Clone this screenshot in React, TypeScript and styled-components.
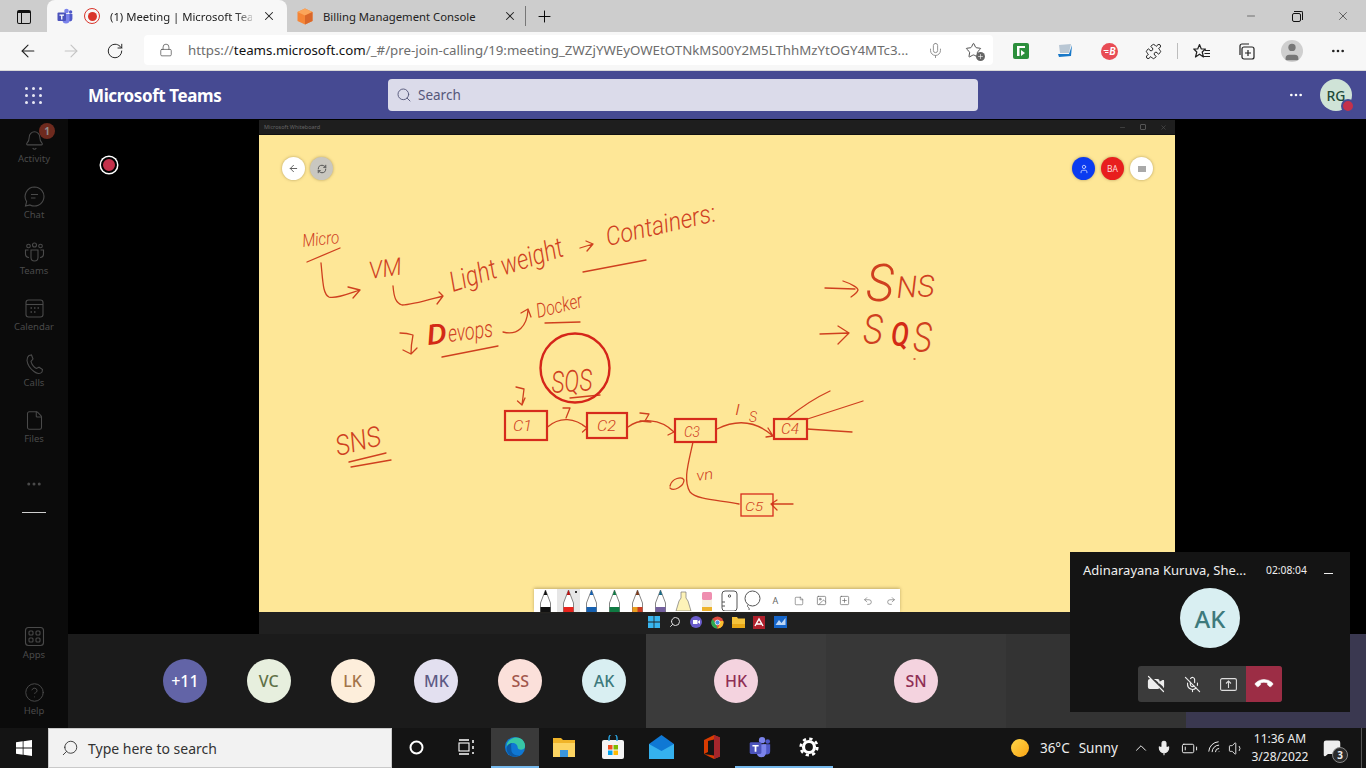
import React from "react";
import styled, { createGlobalStyle } from "styled-components";
import {
  ArrowLeft,
  ArrowRight,
  RotateCw,
  Lock,
  Mic,
  MicOff,
  VideoOff,
  Phone,
  Bell,
  File,
  CircleHelp,
  Search,
  X,
  Plus,
  Minus,
  Star,
  Puzzle,
  MoreHorizontal,
  ChevronUp,
  Wifi,
  Volume1,
  RefreshCw,
  User,
  Undo2,
  Redo2,
  Image as ImageIcon,
  SquarePlus,
  StickyNote,
  BatteryLow,
  MessageSquare,
} from "lucide-react";

const UI_FONT = `"Noto Sans", "Open Sans", Arial, sans-serif`;

const GlobalStyle = createGlobalStyle`
  html, body {
    margin: 0;
    padding: 0;
    width: 1366px;
    height: 768px;
    overflow: hidden;
    background: #000;
    font-family: ${UI_FONT};
  }
  * { box-sizing: border-box; }
`;

const Page = styled.div`
  width: 1366px;
  height: 768px;
  display: flex;
  flex-direction: column;
  overflow: hidden;
`;

/* browser chrome */

const TabStrip = styled.div`
  height: 32px;
  background: #cdcdcd;
  display: flex;
  align-items: stretch;
  flex-shrink: 0;
`;

const TabToggle = styled.div`
  width: 47px;
  display: flex;
  align-items: center;
  justify-content: center;
  padding-top: 1px;
`;

const TabToggleIcon = styled.div`
  width: 14px;
  height: 14px;
  border: 1.5px solid #111;
  border-top-width: 3px;
  border-radius: 2px;
  display: flex;
  & > i {
    width: 4px;
    border-right: 1.3px solid #111;
  }
`;

const Tab = styled.div<{ $active?: boolean; $w: number; $pr: number }>`
  width: ${(p) => p.$w}px;
  background: ${(p) => (p.$active ? "#f7f7f7" : "transparent")};
  border-radius: 8px 8px 0 0;
  display: flex;
  align-items: center;
  padding: 0 ${(p) => p.$pr}px 0 10px;
  gap: 10px;
  font-size: 11.3px;
  color: #222;
  & > svg {
    flex-shrink: 0;
  }
`;

const TabTitle = styled.span<{ $fade?: boolean }>`
  flex: 1;
  min-width: 0;
  white-space: nowrap;
  ${(p) =>
    p.$fade
      ? "-webkit-mask-image: linear-gradient(90deg,#000 88%,rgba(0,0,0,.25));"
      : ""}
`;

const Favicons = styled.div`
  display: flex;
  align-items: center;
  gap: 11px;
`;

const RecordFavicon = styled.div`
  width: 16px;
  height: 16px;
  border-radius: 50%;
  border: 1.5px solid #d9342a;
  display: flex;
  align-items: center;
  justify-content: center;
  &::after {
    content: "";
    width: 9px;
    height: 9px;
    border-radius: 50%;
    background: #d9342a;
  }
`;

const TabDivider = styled.div`
  width: 1px;
  height: 20px;
  background: #777;
  align-self: center;
`;

const NewTab = styled.div`
  width: 36px;
  display: flex;
  align-items: center;
  justify-content: center;
`;

const WindowControls = styled.div`
  margin-left: auto;
  display: flex;
  align-items: center;
`;

const WindowButton = styled.div`
  width: 46px;
  display: flex;
  align-items: center;
  justify-content: center;
  color: #111;
`;

const RestoreGlyph = styled.div`
  width: 9px;
  height: 9px;
  border: 1px solid #111;
  border-radius: 2px;
  position: relative;
  top: 1px;
  left: -1px;
  &::after {
    content: "";
    position: absolute;
    top: -3px;
    right: -3px;
    width: 8px;
    height: 8px;
    border-top: 1px solid #111;
    border-right: 1px solid #111;
    border-radius: 0 2px 0 0;
  }
`;

const Toolbar = styled.div`
  height: 39px;
  background: #f7f7f7;
  border-bottom: 1px solid #d8d8d8;
  display: flex;
  align-items: center;
  flex-shrink: 0;
`;

const NavButton = styled.div<{ $w: number; $dim?: boolean }>`
  width: ${(p) => p.$w}px;
  flex-shrink: 0;
  display: flex;
  justify-content: center;
  color: ${(p) => (p.$dim ? "#c4c4c4" : "#222")};
`;

const Address = styled.div`
  width: 849px;
  flex-shrink: 0;
  height: 30px;
  background: #fff;
  border-radius: 4px;
  display: flex;
  align-items: center;
  padding-left: 15px;
  margin-top: -2px;
`;

const Url = styled.div`
  margin-left: 15px;
  width: 722px;
  flex-shrink: 0;
  font-size: 13.3px;
  white-space: nowrap;
  color: #6d6d6d;
  & b {
    font-weight: 400;
    color: #111;
  }
`;

const AddressIcons = styled.div`
  display: flex;
  align-items: center;
  gap: 21px;
  margin-left: 17px;
  color: #8a8a8a;
`;

const StarSlot = styled.div`
  position: relative;
  display: flex;
  color: #444;
`;

const StarBadge = styled.div`
  position: absolute;
  right: -3px;
  bottom: -2px;
  width: 9px;
  height: 9px;
  border-radius: 50%;
  background: #666;
  color: #fff;
  display: flex;
  align-items: center;
  justify-content: center;
`;

const Extensions = styled.div`
  display: flex;
  align-items: center;
  flex-shrink: 0;
`;

const ExtSlot = styled.div<{ $w: number }>`
  width: ${(p) => p.$w}px;
  flex-shrink: 0;
  display: flex;
  justify-content: center;
  color: #222;
  align-items: center;
`;

const ExtSeparator = styled.div`
  width: 1px;
  height: 16px;
  background: #bdbdbd;
  margin: 0 12px 0 8px;
`;

const ProfileBadge = styled.div`
  width: 22px;
  height: 22px;
  border-radius: 50%;
  background: #cfcfcf;
  overflow: hidden;
  display: flex;
  justify-content: center;
  color: #777;
`;

const TeamsHeader = styled.div`
  height: 48px;
  background: #464a92;
  display: flex;
  align-items: center;
  flex-shrink: 0;
`;

const Waffle = styled.div`
  width: 88px;
  padding-left: 25px;
  display: grid;
  grid-template-columns: repeat(3, 3px);
  gap: 4px;
  & > i {
    width: 3px;
    height: 3px;
    background: #e8e8f4;
    border-radius: 50%;
  }
`;

const Brand = styled.div`
  width: 300px;
  color: #fff;
  font-size: 17px;
  font-weight: 700;
  letter-spacing: -0.4px;
`;

const SearchBox = styled.div`
  width: 590px;
  height: 32px;
  background: #dbdbea;
  border-radius: 4px;
  display: flex;
  align-items: center;
  gap: 6px;
  padding-left: 8px;
  color: #55577a;
  font-size: 13.5px;
`;

const HeaderRight = styled.div`
  margin-left: auto;
  display: flex;
  align-items: center;
  gap: 16px;
  padding-right: 14px;
  color: #fff;
`;

const UserAvatar = styled.div`
  width: 32px;
  height: 32px;
  border-radius: 50%;
  background: #cfe3d7;
  color: #1f4a3a;
  font-size: 14px;
  font-weight: 500;
  display: flex;
  align-items: center;
  justify-content: center;
  position: relative;
`;

const StatusDot = styled.div`
  position: absolute;
  right: -3px;
  bottom: -2px;
  width: 14px;
  height: 14px;
  border-radius: 50%;
  background: #c4314b;
  border: 2px solid #464a92;
`;

/* teams body */

const Body = styled.div`
  flex: 1;
  display: flex;
  position: relative;
  min-height: 0;
`;

const Rail = styled.div`
  width: 68px;
  background: #0b0b0b;
  display: flex;
  flex-direction: column;
  align-items: center;
  padding-top: 5px;
  flex-shrink: 0;
`;

const RailItem = styled.div<{ $h?: number }>`
  width: 100%;
  height: ${(p) => p.$h ?? 56}px;
  display: flex;
  flex-direction: column;
  align-items: center;
  padding-top: 6px;
  color: #4a4a4a;
  font-size: 9.5px;
  line-height: 13px;
  position: relative;
  & > svg {
    margin-bottom: 1px;
    flex-shrink: 0;
  }
`;

const RailBadge = styled.div`
  position: absolute;
  top: -1px;
  left: 39px;
  width: 16px;
  height: 16px;
  border-radius: 50%;
  background: #6e2a1e;
  color: #8d8d8d;
  font-size: 10px;
  font-weight: 700;
  line-height: 16px;
  text-align: center;
`;

const RailMore = styled.div`
  height: 47px;
  display: flex;
  align-items: center;
  color: #4a4a4a;
`;

const RailDash = styled.div`
  width: 24px;
  height: 1px;
  background: #cfcfcf;
  margin-top: 5px;
`;

const RailBottom = styled.div`
  margin-top: auto;
  width: 100%;
`;

const Content = styled.div`
  flex: 1;
  display: flex;
  flex-direction: column;
  min-width: 0;
`;

const Stage = styled.div`
  height: 515px;
  background: #000;
  display: flex;
  justify-content: center;
  padding-top: 1px;
  position: relative;
`;

const RecordMark = styled.div`
  position: absolute;
  left: 33px;
  top: 38px;
  width: 16px;
  height: 16px;
  border-radius: 50%;
  background: #c4314b;
  border: 2px solid #000;
  box-shadow: 0 0 0 1.5px #fff;
`;

const Shared = styled.div`
  width: 916px;
  display: flex;
  flex-direction: column;
`;

const SharedTitle = styled.div`
  height: 15px;
  background: #1e1e1e;
  border-bottom: 1px solid #111;
  display: flex;
  align-items: center;
  justify-content: space-between;
  padding: 0 8px 0 5px;
  color: #666;
  font-size: 5.5px;
`;

const SharedControls = styled.div`
  display: flex;
  gap: 14px;
  align-items: center;
  color: #555;
`;

const SmallRestore = styled.div`
  width: 6px;
  height: 6px;
  border: 1px solid #555;
  border-radius: 1px;
`;

const Board = styled.div`
  height: 477px;
  background: #fee797;
  position: relative;
`;

const BoardLeft = styled.div`
  position: absolute;
  left: 23px;
  top: 22px;
  display: flex;
  gap: 5px;
`;

const BoardRight = styled.div`
  position: absolute;
  right: 22px;
  top: 22px;
  display: flex;
  gap: 6px;
`;

const Round = styled.div<{ $bg: string; $fg?: string }>`
  width: 23px;
  height: 23px;
  border-radius: 50%;
  background: ${(p) => p.$bg};
  color: ${(p) => p.$fg ?? "#555"};
  box-shadow: 0 0 3px rgba(120, 100, 50, 0.55);
  display: flex;
  align-items: center;
  justify-content: center;
  font-size: 8.5px;
`;

const SmallRect = styled.div`
  width: 8px;
  height: 6px;
  background: #a9a9a9;
`;

const InkLayer = styled.svg`
  position: absolute;
  inset: 0;
  width: 100%;
  height: 100%;
`;

const Ink = styled.text<{ $size: number; $bold?: boolean }>`
  font-family: Roboto, "Liberation Sans", sans-serif;
  font-style: italic;
  font-size: ${(p) => p.$size}px;
  font-weight: ${(p) => (p.$bold ? 500 : 300)};
  fill: ${(p) => (p.$bold ? "#d32a16" : "#cf401f")};
`;

const Palette = styled.div`
  position: absolute;
  left: 275px;
  bottom: 0;
  height: 23px;
  width: 366px;
  display: flex;
  background: #fff;
  box-shadow: 0 -1px 3px rgba(120, 100, 50, 0.45);
`;

const PaletteCell = styled.div<{ $active?: boolean }>`
  width: 23px;
  height: 23px;
  flex-shrink: 0;
  background: ${(p) => (p.$active ? "#e6e6e6" : "transparent")};
  display: flex;
  align-items: center;
  justify-content: center;
  color: #666;
  font-size: 9px;
  position: relative;
`;

const ActiveDot = styled.i`
  position: absolute;
  top: 2px;
  right: 3px;
  width: 2px;
  height: 2px;
  background: #333;
`;

const SharedTaskbar = styled.div`
  height: 22px;
  background: #202020;
  display: flex;
  justify-content: center;
  align-items: center;
`;

const SharedSlot = styled.div`
  width: 21px;
  height: 14px;
  display: flex;
  justify-content: center;
`;

/* participants */

const Strip = styled.div`
  height: 94px;
  display: flex;
  background: #1b1b1b;
`;

const Roster = styled.div`
  width: 578px;
  padding-left: 75px;
  display: flex;
  align-items: center;
`;

const RosterCell = styled.div`
  width: 84px;
  display: flex;
  justify-content: center;
`;

const Tile = styled.div<{ $bg: string }>`
  width: 180px;
  background: ${(p) => p.$bg};
  display: flex;
  align-items: center;
  justify-content: center;
`;

const Initials = styled.div<{ $bg: string; $fg: string; $d?: number }>`
  width: ${(p) => p.$d ?? 44}px;
  height: ${(p) => p.$d ?? 44}px;
  border-radius: 50%;
  background: ${(p) => p.$bg};
  color: ${(p) => p.$fg};
  font-size: ${(p) => ((p.$d ?? 44) >= 60 ? 24 : 16)}px;
  font-weight: 500;
  display: flex;
  align-items: center;
  justify-content: center;
`;

const Pip = styled.div`
  position: absolute;
  right: 16px;
  bottom: 16px;
  width: 280px;
  height: 160px;
  background: #141414;
  color: #f0f0f0;
  display: flex;
  flex-direction: column;
  align-items: center;
  padding: 0 13px;
`;

const PipHead = styled.div`
  width: 100%;
  height: 36px;
  display: flex;
  align-items: center;
  font-size: 13px;
`;

const PipName = styled.div`
  width: 183px;
  white-space: nowrap;
`;

const PipTime = styled.div`
  font-size: 10.3px;
  width: 58px;
`;

const PipMin = styled.div`
  width: 9px;
  height: 1px;
  background: #eee;
  margin-top: 6px;
`;

const Controls = styled.div`
  display: flex;
  height: 36px;
  margin-top: 18px;
  border-radius: 3px;
  overflow: hidden;
  background: #3b3b3b;
`;

const ControlButton = styled.div<{ $hang?: boolean }>`
  width: 36px;
  display: flex;
  align-items: center;
  justify-content: center;
  background: ${(p) => (p.$hang ? "#9c2d45" : "transparent")};
  color: #eee;
`;

/* windows taskbar */

const Taskbar = styled.div`
  height: 40px;
  background: #141414;
  display: flex;
  align-items: center;
  flex-shrink: 0;
  color: #fff;
`;

const StartButton = styled.div`
  width: 48px;
  display: flex;
  justify-content: center;
`;

const TaskSearch = styled.div`
  width: 344px;
  height: 40px;
  background: #f2f2f2;
  border: 1px solid #c9c9c9;
  display: flex;
  align-items: center;
  gap: 9px;
  padding-left: 12px;
  color: #333;
  font-size: 14px;
`;

const TaskCell = styled.div<{ $w?: number; $active?: boolean; $open?: boolean }>`
  width: ${(p) => p.$w ?? 49}px;
  height: 40px;
  display: flex;
  align-items: center;
  justify-content: center;
  background: ${(p) => (p.$active ? "#3a3a3a" : "transparent")};
  border-bottom: 2px solid ${(p) => (p.$open ? "#76b9ed" : "transparent")};
`;

const Tray = styled.div`
  margin-left: auto;
  display: flex;
  align-items: center;
  font-size: 13.5px;
  color: #eee;
  height: 40px;
`;

const Sun = styled.div`
  width: 18px;
  height: 18px;
  border-radius: 50%;
  background: linear-gradient(135deg, #ffd84a, #f9a314);
  margin-right: 11px;
`;

const Weather = styled.span<{ $gap: number }>`
  margin-right: ${(p) => p.$gap}px;
  white-space: nowrap;
`;

const TrayIcon = styled.div<{ $w: number }>`
  width: ${(p) => p.$w}px;
  display: flex;
  justify-content: center;
  color: #eee;
`;

const Clock = styled.div`
  width: 64px;
  text-align: center;
  font-size: 12px;
  line-height: 18px;
  margin-left: 2px;
  white-space: nowrap;
`;

const Notify = styled.div`
  width: 40px;
  display: flex;
  justify-content: center;
  position: relative;
  margin-right: 9px;
`;

const NotifyCount = styled.div`
  position: absolute;
  left: 20px;
  top: 8px;
  width: 16px;
  height: 16px;
  border-radius: 50%;
  background: #2b2b2b;
  border: 1px solid #888;
  color: #eee;
  font-size: 10px;
  font-weight: 700;
  line-height: 14px;
  text-align: center;
`;

const ShowDesktop = styled.div`
  width: 1px;
  height: 40px;
  background: #555;
  margin-right: 4px;
`;

/* drawings */

function TeamsLogo({ size = 16 }: { size?: number }) {
  return (
    <svg width={size} height={size} viewBox="0 0 16 16">
      <circle cx="9.5" cy="3" r="2.3" fill="#7b83eb" />
      <circle cx="13.6" cy="4" r="1.7" fill="#5059c9" />
      <path d="M10 6h5.4v5a2.4 2.4 0 0 1-4.8 0z" fill="#5059c9" />
      <path d="M5.5 6h7v6a3.5 3.5 0 0 1-7 0z" fill="#7b83eb" />
      <rect x="0.5" y="4.5" width="8.5" height="8.5" rx="1" fill="#4b53bc" />
      <path d="M2.5 6.5h4.5v1.2H5.4V11.5H4.1V7.7H2.5z" fill="#fff" />
    </svg>
  );
}

function CubeLogo() {
  return (
    <svg width="16" height="17" viewBox="0 0 16 17">
      <path d="M8 .5 15.500 4v9L8 16.500.5 13V4z" fill="#f58536" />
      <path d="M8 .5 15.500 4 8 7.500.5 4z" fill="#fba55a" />
      <path d="M8 7.500v9l7.500-3.500V4z" fill="#d9672a" />
    </svg>
  );
}

function EdgeLogo({ size = 22 }: { size?: number }) {
  return (
    <svg width={size} height={size} viewBox="0 0 24 24">
      <circle cx="12" cy="12" r="11" fill="#0f78d4" />
      <path d="M3 9C5 3 12 0 17.500 2.500 22 4.500 24 9.500 22.500 13 21 15.500 16 15.500 15 13 15 9 11 7 8 8 5.500 8.800 4 10 3 12z" fill="#37c6a5" />
      <path d="M8 15c0 4 4 7 9 6-7 4-13 0-14-6-.5-4 2-7 6-7.500-2 1.500-1 3.500-1 7.500z" fill="#0c59a4" />
    </svg>
  );
}

function WinLogo({ size = 16 }: { size?: number }) {
  return (
    <svg width={size} height={size} viewBox="0 0 16 16" fill="#fff">
      <path d="M0 2.200 6.700 1.300V7.600H0zM7.500 1.200 16 0V7.600H7.500zM0 8.400H6.700V14.700L0 13.800zM7.500 8.400H16V16L7.500 14.800z" />
    </svg>
  );
}

function ChatIcon() {
  return (
    <svg width="21" height="21" viewBox="0 0 21 21" fill="none" stroke="currentColor" strokeWidth="1.1">
      <path d="M10.500 1a9.500 9.500 0 1 1-4.500 17.900L1.500 20 2.600 15.600A9.500 9.500 0 0 1 10.500 1z" />
      <path d="M7 8.500h7M7 12h4.500" />
    </svg>
  );
}

function TeamsRailIcon() {
  return (
    <svg width="21" height="21" viewBox="0 0 21 21" fill="none" stroke="currentColor" strokeWidth="1.1">
      <circle cx="10.500" cy="3" r="2" />
      <circle cx="4.500" cy="4" r="1.800" />
      <circle cx="16.500" cy="4" r="1.800" />
      <path d="M7 8h7v7.500a3.500 3.500 0 0 1-7 0z" />
      <path d="M4.500 8H1.500v4a3.500 3.500 0 0 0 3.500 3.500M16.500 8h3v4a3.500 3.500 0 0 1-3.500 3.500" />
    </svg>
  );
}

function CalendarIcon() {
  return (
    <svg width="21" height="21" viewBox="0 0 21 21" fill="none" stroke="currentColor" strokeWidth="1.1">
      <rect x="2" y="2" width="17" height="17" rx="2.500" />
      <path d="M2 6.500h17" />
      <path d="M6.500 10h1.500M10 10h1.500M13.500 10H15M6.500 14h1.500M10 14h1.500" strokeWidth="1.600" />
    </svg>
  );
}

function CallsIcon() {
  return (
    <svg width="21" height="21" viewBox="0 0 21 21" fill="none" stroke="currentColor" strokeWidth="1.1">
      <path d="M5 1.500 7.500 1 9 5 7 7.500C7.500 10 10 13.500 12.500 14.500L15 13.200 18.500 15.500 18 18C16.500 20 13 20 10 17.500 6 14.500 3.500 10.500 3 6.500 3 4 3.500 2.500 5 1.500z" />
    </svg>
  );
}

function Pen({ color, tip, stripe }: { color: string; tip: string; stripe?: boolean }) {
  return (
    <svg width="15" height="23" viewBox="0 0 15 23">
      <path d="M7.500 1 12.500 14V23H2.500V14z" fill="#fff" stroke="#666" strokeWidth="0.8" />
      <path d="M7.500 1 9.300 6H5.700z" fill={tip} />
      <rect x="2.500" y="18" width="10" height="5" fill={color} />
      {stripe && <rect x="2.500" y="18" width="5" height="5" fill="#e8a020" />}
    </svg>
  );
}

const PENS = [
  { color: "#111", tip: "#111" },
  { color: "#e8231c", tip: "#b11" },
  { color: "#1560b0", tip: "#1560b0" },
  { color: "#0f7a43", tip: "#0f7a43" },
  { color: "#c93c22", tip: "#7b3a1c", stripe: true },
  { color: "#735f9e", tip: "#1a6a86" },
];

const INK_PATHS = [
  "M307 262 340 248",
  "M321 263C323 283 323 294 329 297 336 299 348 294 360 290M348 287 360 290 353 298",
  "M393 286C394 298 396 303 402 305 412 305 428 300 443 296M439 292 443 296 437 304",
  "M580 248 593 244M586 241 593 244 587 251",
  "M583 272 646 260",
  "M400 333C405 333 410 334 413 335 412 340 411 347 411 354M403 350 411 354 417 348",
  "M442 357 498 346",
  "M503 332C518 336 527 326 528 310M521 313 528 309 531 317",
  "M545 323 580 322",
  "M570 398 600 395",
  "M516 387 524 389 522 405M517.500 401 522 405 525 398",
  "M547.500 427C560 416 575 418 587 428M582.500 425 587 428 582.500 432",
  "M628 427C640 418 660 418 674 432M669 428 674 432 668 435",
  "M717 429C735 420 755 420 773 436M766 437 773 436 768 428",
  "M563 408 570 408 566 418",
  "M640 413 649 414 645 421M640 421 651 422",
  "M788 418C800 408 815 398 830 391",
  "M807.500 419 863 401",
  "M807 429 852 432",
  "M693 442C688 465 683 480 690 492 697 500 720 500 739 504",
  "M670 486C672 478 682 476 684 480 684 486 674 492 670 488",
  "M793 504 771 504M777 500 771 504 777 510",
  "M349 462 386 453",
  "M351 467 391 460",
  "M825 288 855 289M843 281C852 284 858 288 858 290 857 293 854 295 851 297",
  "M820 334 849 333M838 326 849 333 838 344",
  "M914 359h1",
];

const INK_BOXES = [
  { x: 505, y: 411, w: 42, h: 29, sw: 2.2 },
  { x: 587, y: 413, w: 40, h: 25, sw: 2.2 },
  { x: 675, y: 419, w: 41, h: 23, sw: 2.2 },
  { x: 774, y: 419, w: 33, h: 20, sw: 2.2 },
  { x: 741, y: 494, w: 32, h: 22, sw: 1.3 },
];

const INK_WORDS = [
  { t: "Micro", x: 303, y: 247, size: 18, len: 37, rot: -6 },
  { t: "VM", x: 370, y: 279, size: 24, len: 33, rot: -8 },
  { t: "Light weight", x: 453, y: 292, size: 28, len: 118, rot: -18 },
  { t: "Containers:", x: 608, y: 246, size: 26, len: 112, rot: -13 },
  { t: "D", x: 428, y: 345, size: 28, len: 20, rot: -7, bold: true },
  { t: "evops", x: 449, y: 342, size: 24, len: 45, rot: -7 },
  { t: "Docker", x: 538, y: 318, size: 20, len: 47, rot: -14 },
  { t: "SQS", x: 552, y: 393, size: 30, len: 41, rot: -4 },
  { t: "SNS", x: 338, y: 456, size: 28, len: 46, rot: -14 },
  { t: "C1", x: 513, y: 431, size: 15, len: 19, rot: 0 },
  { t: "C2", x: 597, y: 431, size: 15, len: 19, rot: 0 },
  { t: "C3", x: 684, y: 437, size: 14, len: 16, rot: 0 },
  { t: "C4", x: 781, y: 434, size: 14, len: 18, rot: 0 },
  { t: "C5", x: 745, y: 511, size: 13, len: 18, rot: 0 },
  { t: "I", x: 735, y: 415, size: 14, len: 5, rot: 0 },
  { t: "S", x: 749, y: 422, size: 15, len: 8, rot: 0 },
  { t: "vn", x: 697, y: 481, size: 15, len: 17, rot: -8 },
  { t: "S", x: 866, y: 301, size: 52, len: 28, rot: 0 },
  { t: "NS", x: 897, y: 298, size: 30, len: 38, rot: -3 },
  { t: "S", x: 863, y: 344, size: 42, len: 20, rot: 0 },
  { t: "Q", x: 891, y: 346, size: 34, len: 18, rot: 0, bold: true },
  { t: "S", x: 913, y: 352, size: 42, len: 19, rot: 0 },
];

function BoardInk() {
  return (
    <InkLayer viewBox="259 135 916 477">
      <g fill="none" stroke="#cf401f" strokeWidth="1.3" strokeLinecap="round" strokeLinejoin="round">
        {INK_PATHS.map((d) => (
          <path key={d} d={d} />
        ))}
      </g>
      <circle cx="575" cy="368" r="34.500" fill="none" stroke="#d5261a" strokeWidth="2.4" />
      {INK_BOXES.map((b) => (
        <rect key={b.x} x={b.x} y={b.y} width={b.w} height={b.h} fill="none" stroke="#d62b1c" strokeWidth={b.sw} />
      ))}
      {INK_WORDS.map((w) => (
        <Ink
          key={w.t + w.x}
          x={w.x}
          y={w.y}
          $size={w.size}
          $bold={w.bold}
          textLength={w.len}
          lengthAdjust="spacingAndGlyphs"
          transform={`rotate(${w.rot} ${w.x} ${w.y})`}
        >
          {w.t}
        </Ink>
      ))}
    </InkLayer>
  );
}

const ROSTER = [
  { t: "+11", bg: "#6264a7", fg: "#fff" },
  { t: "VC", bg: "#e7efde", fg: "#5f7148" },
  { t: "LK", bg: "#fdeedb", fg: "#a3754a" },
  { t: "MK", bg: "#e3e0f0", fg: "#5d5a85" },
  { t: "SS", bg: "#fbe0da", fg: "#a2574c" },
  { t: "AK", bg: "#d9eff2", fg: "#3d7a7c" },
];

const RAIL = [
  { label: "Activity", icon: <Bell size={21} strokeWidth={1.2} />, badge: true },
  { label: "Chat", icon: <ChatIcon /> },
  { label: "Teams", icon: <TeamsRailIcon /> },
  { label: "Calendar", icon: <CalendarIcon /> },
  { label: "Calls", icon: <CallsIcon /> },
  { label: "Files", icon: <File size={21} strokeWidth={1.2} /> },
];

export default function App() {
  return (
    <Page>
      <GlobalStyle />
      <TabStrip>
        <TabToggle>
          <TabToggleIcon>
            <i />
          </TabToggleIcon>
        </TabToggle>
        <Tab $active $w={240} $pr={11}>
          <Favicons>
            <TeamsLogo />
            <RecordFavicon />
          </Favicons>
          <TabTitle $fade>(1) Meeting | Microsoft Tean</TabTitle>
          <X size={14} strokeWidth={1.8} />
        </Tab>
        <Tab $w={238} $pr={8}>
          <CubeLogo />
          <TabTitle>Billing Management Console</TabTitle>
          <X size={14} strokeWidth={1.8} />
        </Tab>
        <TabDivider />
        <NewTab>
          <Plus size={19} strokeWidth={1.2} />
        </NewTab>
        <WindowControls>
          <WindowButton>
            <Minus size={12} strokeWidth={1} />
          </WindowButton>
          <WindowButton>
            <RestoreGlyph />
          </WindowButton>
          <WindowButton>
            <X size={14} strokeWidth={1} />
          </WindowButton>
        </WindowControls>
      </TabStrip>

      <Toolbar>
        <NavButton $w={56}>
          <ArrowLeft size={20} strokeWidth={1.3} />
        </NavButton>
        <NavButton $w={30} $dim>
          <ArrowRight size={20} strokeWidth={1.3} />
        </NavButton>
        <NavButton $w={58}>
          <RotateCw size={18} strokeWidth={1.3} />
        </NavButton>
        <Address>
          <Lock size={14} strokeWidth={1.3} color="#555" />
          <Url>
            https://<b>teams.microsoft.com</b>/_#/pre-join-calling/19:meeting_ZWZjYWEyOWEtOTNkMS00Y2M5LThhMzYtOGY4MTc3...
          </Url>
          <AddressIcons>
            <Mic size={17} strokeWidth={1.3} />
            <StarSlot>
              <Star size={17} strokeWidth={1.3} />
              <StarBadge>
                <Plus size={7} strokeWidth={2} />
              </StarBadge>
            </StarSlot>
          </AddressIcons>
        </Address>
        <Extensions>
          <ExtSlot $w={56}>
            <svg width="16" height="16" viewBox="0 0 16 16">
              <rect width="16" height="16" rx="2" fill="#2c8f3c" />
              <path d="M4 13V3h8v2H6.500v8zM8 7l4 3-4 3z" fill="#fff" />
            </svg>
          </ExtSlot>
          <ExtSlot $w={32}>
            <svg width="16" height="16" viewBox="0 0 16 16">
              <path d="M2 2 14 1 12 10H3z" fill="#b9c7d4" />
              <path d="M1 11 12 11 15 2 14 13 2 14z" fill="#1878c8" />
            </svg>
          </ExtSlot>
          <ExtSlot $w={56}>
            <svg width="17" height="17" viewBox="0 0 17 17">
              <circle cx="8.500" cy="8.500" r="8.500" fill="#e84c55" />
              <path d="M2.500 7.500h5M4 9.500h3.500" stroke="#fff" strokeWidth="1.1" fill="none" />
              <text x="8.500" y="12" fontSize="10" fontWeight="700" fontStyle="italic" fill="#fff" fontFamily="Roboto, sans-serif">
                B
              </text>
            </svg>
          </ExtSlot>
          <ExtSlot $w={32}>
            <Puzzle size={17} strokeWidth={1.4} />
          </ExtSlot>
          <ExtSeparator />
          <ExtSlot $w={24}>
            <svg width="18" height="17" viewBox="0 0 18 17" fill="none" stroke="#222" strokeWidth="1.2">
              <path d="M6.500 1.500 8.300 6H12.500L9.200 9 10.500 14 6.500 11.200 2.500 14 3.800 9 .8 6H4.700z" strokeLinejoin="round" />
              <path d="M12 7.500h5M11.500 10.500h5.500M11 13.500h6" />
            </svg>
          </ExtSlot>
          <ExtSlot $w={64}>
            <svg width="18" height="18" viewBox="0 0 18 18" fill="none" stroke="#222" strokeWidth="1.2">
              <rect x="5" y="5" width="12" height="12" rx="2" />
              <path d="M3 13V4a2 2 0 0 1 2-2h7M11 8v6M8 11h6" />
            </svg>
          </ExtSlot>
          <ExtSlot $w={28}>
            <ProfileBadge>
              <User size={24} fill="#777" strokeWidth={0} />
            </ProfileBadge>
          </ExtSlot>
          <ExtSlot $w={64}>
            <MoreHorizontal size={16} />
          </ExtSlot>
        </Extensions>
      </Toolbar>

      <TeamsHeader>
        <Waffle>
          {Array.from({ length: 9 }).map((_, i) => (
            <i key={i} />
          ))}
        </Waffle>
        <Brand>Microsoft Teams</Brand>
        <SearchBox>
          <Search size={16} strokeWidth={1.4} />
          Search
        </SearchBox>
        <HeaderRight>
          <MoreHorizontal size={16} />
          <UserAvatar>
            RG
            <StatusDot />
          </UserAvatar>
        </HeaderRight>
      </TeamsHeader>

      <Body>
        <Rail>
          {RAIL.map(({ label, icon, badge }) => (
            <RailItem key={label}>
              {icon}
              {label}
              {badge && <RailBadge>1</RailBadge>}
            </RailItem>
          ))}
          <RailMore>
            <MoreHorizontal size={18} strokeWidth={2} />
          </RailMore>
          <RailDash />
          <RailBottom>
            <RailItem>
              <svg width="21" height="21" viewBox="0 0 21 21" fill="none" stroke="currentColor" strokeWidth="1.1">
                <rect x="1.500" y="1.500" width="18" height="18" rx="3" />
                <rect x="5" y="5" width="4" height="4" rx="1" />
                <rect x="12" y="5" width="4" height="4" rx="1" />
                <rect x="5" y="12" width="4" height="4" rx="1" />
                <rect x="12" y="12" width="4" height="4" rx="1" />
              </svg>
              Apps
            </RailItem>
            <RailItem $h={52}>
              <CircleHelp size={21} strokeWidth={1.1} />
              Help
            </RailItem>
          </RailBottom>
        </Rail>

        <Content>
          <Stage>
            <RecordMark />
            <Shared>
              <SharedTitle>
                Microsoft Whiteboard
                <SharedControls>
                  <Minus size={7} />
                  <SmallRestore />
                  <X size={7} />
                </SharedControls>
              </SharedTitle>
              <Board>
                <BoardInk />
                <BoardLeft>
                  <Round $bg="#fff">
                    <ArrowLeft size={11} />
                  </Round>
                  <Round $bg="#c9c7c0">
                    <RefreshCw size={10} strokeWidth={2.4} />
                  </Round>
                </BoardLeft>
                <BoardRight>
                  <Round $bg="#0b3bf0" $fg="#cdd6ff">
                    <User size={10} />
                  </Round>
                  <Round $bg="#e81e1e" $fg="#ffd9d9">
                    BA
                  </Round>
                  <Round $bg="#fff">
                    <SmallRect />
                  </Round>
                </BoardRight>
                <Palette>
                  {PENS.map((p, i) => (
                    <PaletteCell key={p.color} $active={i === 1}>
                      <Pen color={p.color} tip={p.tip} stripe={p.stripe} />
                      {i === 1 && <ActiveDot />}
                    </PaletteCell>
                  ))}
                  <PaletteCell>
                    <svg width="17" height="20" viewBox="0 0 17 20">
                      <path d="M6 1h5v6l2 3 3 10H1L4 10l2-3z" fill="#fdf3b8" stroke="#777" strokeWidth="0.7" />
                    </svg>
                  </PaletteCell>
                  <PaletteCell>
                    <svg width="12" height="20" viewBox="0 0 12 20">
                      <rect x="1" y="1" width="10" height="8" rx="1.500" fill="#ef8fb0" />
                      <rect x="1" y="9" width="10" height="7" fill="#f5f0e0" />
                      <rect x="1" y="16" width="10" height="4" fill="#edb32e" />
                    </svg>
                  </PaletteCell>
                  <PaletteCell>
                    <svg width="17" height="21" viewBox="0 0 17 21" fill="none" stroke="#555" strokeWidth="1">
                      <rect x="1" y="1" width="15" height="20" rx="3" />
                      <circle cx="8.500" cy="6" r="1.200" />
                      <path d="M1 12h3M1 16h3" />
                    </svg>
                  </PaletteCell>
                  <PaletteCell>
                    <svg width="19" height="21" viewBox="0 0 19 21" fill="none" stroke="#555" strokeWidth="1">
                      <circle cx="9.500" cy="8.500" r="7.500" />
                      <path d="M5 15c-2 2 2 2 1 5" />
                    </svg>
                  </PaletteCell>
                  <PaletteCell>A</PaletteCell>
                  <PaletteCell>
                    <StickyNote size={10} strokeWidth={1.5} />
                  </PaletteCell>
                  <PaletteCell>
                    <ImageIcon size={11} strokeWidth={1.5} />
                  </PaletteCell>
                  <PaletteCell>
                    <SquarePlus size={11} strokeWidth={1.5} />
                  </PaletteCell>
                  <PaletteCell>
                    <Undo2 size={10} strokeWidth={1.5} />
                  </PaletteCell>
                  <PaletteCell>
                    <Redo2 size={10} strokeWidth={1.5} />
                  </PaletteCell>
                </Palette>
              </Board>
              <SharedTaskbar>
                <SharedSlot>
                  <svg width="12" height="12" viewBox="0 0 12 12" fill="#38b6f0">
                    <path d="M0 0h5.600v5.600H0zM6.400 0H12v5.600H6.400zM0 6.400h5.600V12H0zM6.400 6.400H12V12H6.400z" />
                  </svg>
                </SharedSlot>
                <SharedSlot>
                  <Search size={12} color="#ddd" strokeWidth={2} style={{ transform: "scaleX(-1)" }} />
                </SharedSlot>
                <SharedSlot>
                  <svg width="13" height="12" viewBox="0 0 13 12">
                    <circle cx="6" cy="6" r="6" fill="#6a5ccc" />
                    <rect x="3" y="4" width="4.500" height="4" fill="#fff" />
                    <path d="M7.500 6 10 4v4z" fill="#fff" />
                  </svg>
                </SharedSlot>
                <SharedSlot>
                  <svg width="13" height="13" viewBox="0 0 13 13">
                    <circle cx="6.500" cy="6.500" r="6" fill="#dd4b3e" />
                    <path d="M1 9.500A6 6 0 0 1 1.500 3l3 4 2 5.500A6 6 0 0 1 1 9.500z" fill="#2da94f" />
                    <path d="M6.500 12.500A6 6 0 0 0 12.300 5H6.500l2 4z" fill="#fbc02d" />
                    <circle cx="6.500" cy="6.500" r="2.400" fill="#4a90e2" stroke="#fff" strokeWidth="0.7" />
                  </svg>
                </SharedSlot>
                <SharedSlot>
                  <svg width="13" height="12" viewBox="0 0 13 12">
                    <path d="M0 1h5l1 1.500h7V12H0z" fill="#f5c33b" />
                    <rect y="8" width="13" height="4" fill="#e8a817" />
                  </svg>
                </SharedSlot>
                <SharedSlot>
                  <svg width="12" height="13" viewBox="0 0 12 13">
                    <rect width="12" height="13" fill="#b0202c" />
                    <path d="M2 10 6 3l4 7M3.500 8h5" stroke="#fff" strokeWidth="1.4" fill="none" />
                  </svg>
                </SharedSlot>
                <SharedSlot>
                  <svg width="13" height="12" viewBox="0 0 13 12">
                    <rect width="13" height="12" fill="#1565c9" />
                    <path d="M1.500 9 5 4l2.500 3L11.500 2v7z" fill="#bcd6f5" />
                  </svg>
                </SharedSlot>
              </SharedTaskbar>
            </Shared>
          </Stage>

          <Strip>
            <Roster>
              {ROSTER.map((r) => (
                <RosterCell key={r.t}>
                  <Initials $bg={r.bg} $fg={r.fg}>
                    {r.t}
                  </Initials>
                </RosterCell>
              ))}
            </Roster>
            <Tile $bg="#3b3b3b">
              <Initials $bg="#f4d3df" $fg="#8f2f55">
                HK
              </Initials>
            </Tile>
            <Tile $bg="#373737">
              <Initials $bg="#f4d3df" $fg="#8f2f55">
                SN
              </Initials>
            </Tile>
            <Tile $bg="#333333" />
            <Tile $bg="#3a3850" />
          </Strip>
        </Content>

        <Pip>
          <PipHead>
            <PipName>Adinarayana Kuruva, She...</PipName>
            <PipTime>02:08:04</PipTime>
            <PipMin />
          </PipHead>
          <Initials $bg="#d9eff2" $fg="#3d7a7c" $d={60}>
            AK
          </Initials>
          <Controls>
            <ControlButton>
              <VideoOff size={18} strokeWidth={1.6} fill="#eee" />
            </ControlButton>
            <ControlButton>
              <MicOff size={17} strokeWidth={1.6} />
            </ControlButton>
            <ControlButton>
              <svg width="17" height="13" viewBox="0 0 17 13" fill="none" stroke="#ddd" strokeWidth="1.1">
                <rect x="0.600" y="0.600" width="15.800" height="11.800" rx="1.500" />
                <path d="M8.500 10V3.500M6 5.500 8.500 3l2.500 2.500" />
              </svg>
            </ControlButton>
            <ControlButton $hang>
              <Phone size={16} fill="#fff" strokeWidth={1} style={{ transform: "rotate(135deg)" }} />
            </ControlButton>
          </Controls>
        </Pip>
      </Body>

      <Taskbar>
        <StartButton>
          <WinLogo />
        </StartButton>
        <TaskSearch>
          <Search size={18} strokeWidth={1.2} style={{ transform: "scaleX(-1)" }} />
          Type here to search
        </TaskSearch>
        <TaskCell>
          <svg width="15" height="15" viewBox="0 0 15 15" fill="none" stroke="#fff" strokeWidth="2">
            <circle cx="7.500" cy="7.500" r="6" />
          </svg>
        </TaskCell>
        <TaskCell $w={50}>
          <svg width="17" height="16" viewBox="0 0 17 16" fill="none" stroke="#fff" strokeWidth="1.1">
            <rect x="1" y="4" width="10" height="8" />
            <path d="M1 1h10M1 15h10M15 1v3M15 7v3M15 13v2" strokeWidth="1.5" />
          </svg>
        </TaskCell>
        <TaskCell $active $open $w={48}>
          <EdgeLogo />
        </TaskCell>
        <TaskCell>
          <svg width="22" height="20" viewBox="0 0 22 20">
            <path d="M0 1h8l2 2h12v17H0z" fill="#f0b429" />
            <rect y="6" width="22" height="14" fill="#fcd462" />
            <rect x="7" y="13" width="8" height="7" fill="#3a96dd" />
          </svg>
        </TaskCell>
        <TaskCell>
          <svg width="22" height="24" viewBox="0 0 22 24">
            <rect y="5" width="22" height="19" rx="2" fill="#f4f4f4" />
            <path d="M7 6V3a4 4 0 0 1 8 0v3" fill="none" stroke="#2aa3de" strokeWidth="1.4" />
            <rect x="6" y="10" width="4.500" height="4.500" fill="#f25022" />
            <rect x="11.500" y="10" width="4.500" height="4.500" fill="#7fba00" />
            <rect x="6" y="15.500" width="4.500" height="4.500" fill="#00a4ef" />
            <rect x="11.500" y="15.500" width="4.500" height="4.500" fill="#ffb900" />
          </svg>
        </TaskCell>
        <TaskCell>
          <svg width="25" height="24" viewBox="0 0 25 24">
            <path d="M0 9 12.500 0 25 9V24H0z" fill="#0f78d4" />
            <path d="M0 9 12.500 16 25 9V24H0z" fill="#35b1ee" />
          </svg>
        </TaskCell>
        <TaskCell>
          <svg width="18" height="24" viewBox="0 0 18 24">
            <path d="M2 5 12 0l6 2.500v19L12 24 2 19l10 1.500V4.500L6 6v11l-4 2z" fill="#d83b01" />
            <path d="M12 0l6 2.500v19L12 24z" fill="#a4262c" />
          </svg>
        </TaskCell>
        <TaskCell $open>
          <TeamsLogo size={22} />
        </TaskCell>
        <TaskCell $open>
          <svg width="20" height="20" viewBox="0 0 20 20" fill="none" stroke="#fff">
            <circle cx="10" cy="10" r="5.500" strokeWidth="3.2" />
            <circle cx="10" cy="10" r="8.300" strokeWidth="2.6" strokeDasharray="3.250 3.270" />
          </svg>
        </TaskCell>
        <Tray>
          <Sun />
          <Weather $gap={9}>36°C</Weather>
          <Weather $gap={10}>Sunny</Weather>
          <TrayIcon $w={26}>
            <ChevronUp size={18} strokeWidth={1.3} />
          </TrayIcon>
          <TrayIcon $w={20}>
            <Mic size={16} strokeWidth={1.6} fill="#eee" />
          </TrayIcon>
          <TrayIcon $w={30}>
            <BatteryLow size={17} strokeWidth={1.4} />
          </TrayIcon>
          <TrayIcon $w={22}>
            <Wifi size={16} strokeWidth={1.4} style={{ transform: "rotate(-45deg)" }} />
          </TrayIcon>
          <TrayIcon $w={20}>
            <Volume1 size={17} strokeWidth={1.3} />
          </TrayIcon>
          <Clock>
            11:36 AM
            <br />
            3/28/2022
          </Clock>
          <Notify>
            <MessageSquare size={18} fill="#eee" color="#eee" />
            <NotifyCount>3</NotifyCount>
          </Notify>
          <ShowDesktop />
        </Tray>
      </Taskbar>
    </Page>
  );
}
